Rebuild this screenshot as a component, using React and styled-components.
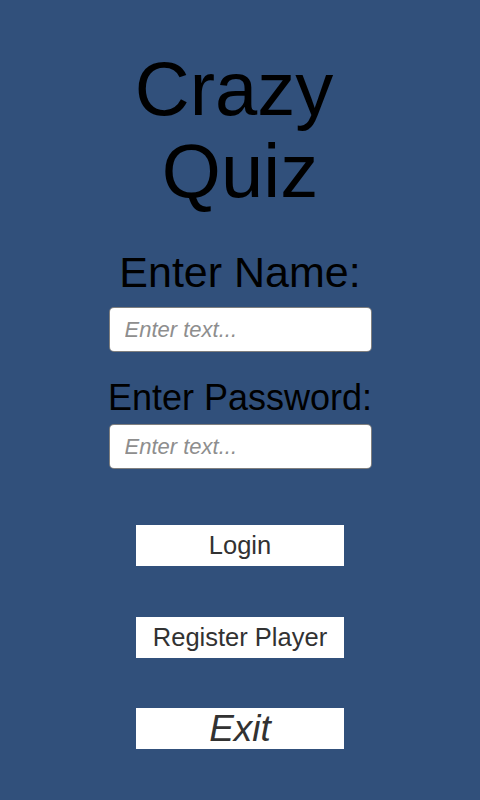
import React from 'react';
import styled, { createGlobalStyle } from 'styled-components';

const GlobalStyle = createGlobalStyle`
    html, body {
        margin: 0;
        padding: 0;
        background-color: #31507b;
    }
    #root {
        min-height: 800px;
    }
`;

const Screen = styled.div`
    background-color: #31507b;
    display: flex;
    flex-direction: column;
    align-items: center;
    font-family: "Liberation Sans", Arial, sans-serif;
    height: 800px;
    padding-top: 48px;
    box-sizing: border-box;
`;

const Title = styled.h1`
    color: #000;
    font-size: 76px;
    font-weight: normal;
    line-height: 82px;
    margin: 0;
    text-align: center;
`;

const TitleLine = styled.span`
    display: block;
    margin-right: ${(p) => p.shift || 0}px;
`;

const Label = styled.div`
    color: #000;
    font-size: ${(p) => p.size}px;
    line-height: ${(p) => p.lh}px;
    margin-top: ${(p) => p.top}px;
    text-align: center;
`;

const TextField = styled.input`
    background: #fff;
    border: 1px solid rgba(0, 0, 0, 0.5);
    border-radius: 5px;
    box-sizing: border-box;
    color: #222;
    font-family: "Liberation Sans", Arial, sans-serif;
    font-size: 22px;
    height: 45px;
    margin-top: ${(p) => p.top}px;
    outline: none;
    padding: 0 0 0 15px;
    width: 263px;

    &::placeholder {
        color: #8e8e8e;
        font-style: italic;
    }
`;

const Button = styled.button`
    align-items: center;
    background: #fff;
    border: none;
    border-radius: 0;
    color: #323232;
    display: flex;
    font-family: "Liberation Sans", Arial, sans-serif;
    font-size: ${(p) => (p.italic ? 37 : 25.5)}px;
    font-style: ${(p) => (p.italic ? 'italic' : 'normal')};
    height: 41px;
    justify-content: center;
    margin-top: ${(p) => p.top}px;
    padding: 0;
    width: 208px;
`;

export default function App() {
    return (
        <>
            <GlobalStyle />
            <Screen>
                <Title>
                    <TitleLine shift={12}>Crazy</TitleLine>
                    <TitleLine>Quiz</TitleLine>
                </Title>
                <Label size={43} lh={50} top={35}>Enter Name:</Label>
                <TextField top={10} placeholder="Enter text..." />
                <Label size={36} lh={44} top={24}>Enter Password:</Label>
                <TextField top={4} type="password" placeholder="Enter text..." />
                <Button top={56}>Login</Button>
                <Button top={51}>Register Player</Button>
                <Button top={50} italic>Exit</Button>
            </Screen>
        </>
    );
}
